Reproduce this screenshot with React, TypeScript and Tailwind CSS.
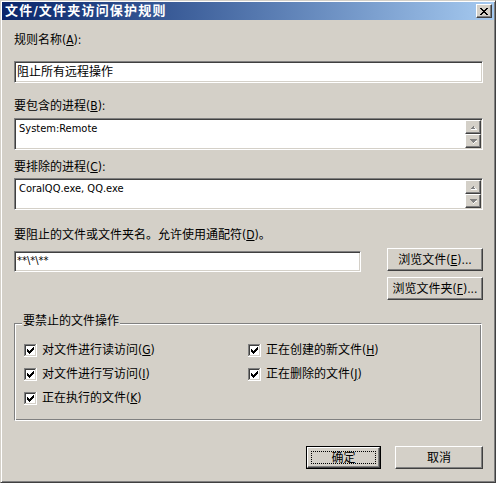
import React from 'react'

const sunken =
  'border border-t-[#808080] border-l-[#808080] border-r-white border-b-white shadow-[inset_1px_1px_0_#404040,inset_-1px_-1px_0_#d4d0c8] bg-white'
const raised =
  'border border-t-white border-l-white border-r-[#404040] border-b-[#404040] shadow-[inset_-1px_-1px_0_#808080] bg-[#d4d0c8]'

const Check: React.FC = () => (
  <svg width="13" height="13" viewBox="0 0 13 13" shapeRendering="crispEdges" className="shrink-0">
    <rect x="0" y="0" width="13" height="13" fill="#fff" />
    <rect x="0" y="0" width="12" height="1" fill="#808080" />
    <rect x="0" y="0" width="1" height="12" fill="#808080" />
    <rect x="1" y="1" width="10" height="1" fill="#404040" />
    <rect x="1" y="1" width="1" height="10" fill="#404040" />
    <rect x="1" y="11" width="11" height="1" fill="#d4d0c8" />
    <rect x="11" y="1" width="1" height="11" fill="#d4d0c8" />
    {[5, 6, 7, 6, 5, 4, 3].map((y, i) => (
      <rect key={i} x={3 + i} y={y} width="1" height="3" fill="#000" />
    ))}
  </svg>
)

const Arrow: React.FC<{ up?: boolean }> = ({ up }) => (
  <svg width="7" height="5" viewBox="0 0 7 5" shapeRendering="crispEdges">
    {up ? (
      <>
        <path d="M3 1h1v1h1v1h1v1H1V3h1V2h1z" fill="#808080" />
        <path d="M4 2h1v1H4zM5 3h1v1H5zM1 4h6v1H1z" fill="#fff" opacity="0.9" />
      </>
    ) : (
      <>
        <path d="M0 0h7v1H6v1H5v1H4v1H3V3H2V2H1V1H0z" fill="#808080" />
        <path d="M4 3h1v1H4zM5 2h2v1H5zM3 4h1v1H3z" fill="#fff" opacity="0.9" />
      </>
    )}
  </svg>
)

const ScrollBox: React.FC<{ text: string }> = ({ text }) => (
  <div className={`${sunken} flex h-[32px] p-[1px]`}>
    <div className="flex-1 pl-[3px] pt-[2px] text-[11px] leading-[14px]">{text}</div>
    <div className="flex w-[16px] flex-col">
      <div className={`${raised} flex h-[14px] items-center justify-center`}>
        <Arrow up />
      </div>
      <div className={`${raised} flex h-[14px] items-center justify-center`}>
        <Arrow />
      </div>
    </div>
  </div>
)

const Label: React.FC<{ children: React.ReactNode; className?: string }> = ({ children, className }) => (
  <div className={`h-[16px] leading-[16px] ${className ?? ''}`}>{children}</div>
)

const Box: React.FC<{ label: React.ReactNode }> = ({ label }) => (
  <div className="flex h-[16px] items-center gap-[5px] leading-[16px]">
    <Check />
    <span>{label}</span>
  </div>
)

const App: React.FC = () => {
  return (
    <div className="h-[483px] w-[496px] overflow-hidden bg-[#d4d0c8] font-['DejaVu_Sans_Condensed','DejaVu_Sans','Noto_Sans_CJK_SC',sans-serif] text-[12px] text-black">
      <div className="flex h-full flex-col border border-t-[#d4d0c8] border-l-[#d4d0c8] border-r-[#404040] border-b-[#404040] p-[1px] shadow-[inset_1px_1px_0_#fff,inset_-1px_-1px_0_#808080]">
        <div className="flex h-[18px] shrink-0 items-center justify-between bg-gradient-to-r from-[#0a246a] to-[#a6caf0] pl-[3px] pr-[2px]">
          <span className="text-[13px] leading-[16px] font-bold tracking-[1.2px] text-white">文件/文件夹访问保护规则</span>
          <div className={`${raised} flex h-[14px] w-[16px] items-center justify-center`}>
            <svg width="8" height="7" viewBox="0 0 8 7" shapeRendering="crispEdges">
              <path
                d="M0 0h2v1h1v1h2V1h1V0h2v1H7v1H6v1H5v1h1v1h1v1h1v1H6V6H5V5H3v1H2v1H0V6h1V5h1V4h1V3H2V2H1V1H0z"
                fill="#000"
              />
            </svg>
          </div>
        </div>

        <div className="flex flex-1 flex-col pl-[12px] pr-[11px]">
          <Label className="mt-[12px]">
            规则名称(<u>A</u>):
          </Label>
          <div className={`${sunken} mt-[13px] flex h-[22px] items-center pl-[2px]`}>阻止所有远程操作</div>

          <Label className="mt-[15px]">
            要包含的进程(<u>B</u>):
          </Label>
          <div className="mt-[4px]">
            <ScrollBox text="System:Remote" />
          </div>

          <Label className="mt-[9px]">
            要排除的进程(<u>C</u>):
          </Label>
          <div className="mt-[3px]">
            <ScrollBox text="CoralQQ.exe, QQ.exe" />
          </div>

          <Label className="mt-[17px]">
            要阻止的文件或文件夹名。允许使用通配符(<u>D</u>)。
          </Label>
          <div className="mt-[5px] flex items-start justify-between">
            <div className={`${sunken} mt-[3px] flex h-[21px] w-[347px] items-center pl-[2px] text-[11px]`}>**\*\**</div>
            <div className="flex w-[96px] flex-col gap-[6px]">
              <div className={`${raised} flex h-[23px] items-center justify-center`}>
                浏览文件(<u>E</u>)...
              </div>
              <div className={`${raised} flex h-[23px] items-center justify-center`}>
                浏览文件夹(<u>F</u>)...
              </div>
            </div>
          </div>

          <div className="relative mt-[23px] mr-[1px] h-[98px] border border-t-[#808080] border-l-[#808080] border-r-white border-b-white shadow-[inset_1px_1px_0_#fff,inset_-1px_-1px_0_#808080]">
            <span className="absolute top-[-11px] left-[7px] bg-[#d4d0c8] px-[1px] leading-[16px]">要禁止的文件操作</span>
            <div className="grid grid-cols-[224px_1fr] gap-y-[8px] pt-[18px] pl-[9px]">
              <Box label={<>对文件进行读访问(<u>G</u>)</>} />
              <Box label={<>正在创建的新文件(<u>H</u>)</>} />
              <Box label={<>对文件进行写访问(<u>I</u>)</>} />
              <Box label={<>正在删除的文件(<u>J</u>)</>} />
              <Box label={<>正在执行的文件(<u>K</u>)</>} />
            </div>
          </div>

          <div className="mt-[25px] flex justify-end gap-[14px]">
            <div className="h-[23px] w-[75px] border border-black">
              <div className={`${raised} relative flex h-full items-center justify-center`}>
                <div className="absolute inset-[3px] border border-dotted border-black" />
                确定
              </div>
            </div>
            <div className={`${raised} flex h-[23px] w-[88px] items-center justify-center`}>取消</div>
          </div>
        </div>
      </div>
    </div>
  )
}

export default App
